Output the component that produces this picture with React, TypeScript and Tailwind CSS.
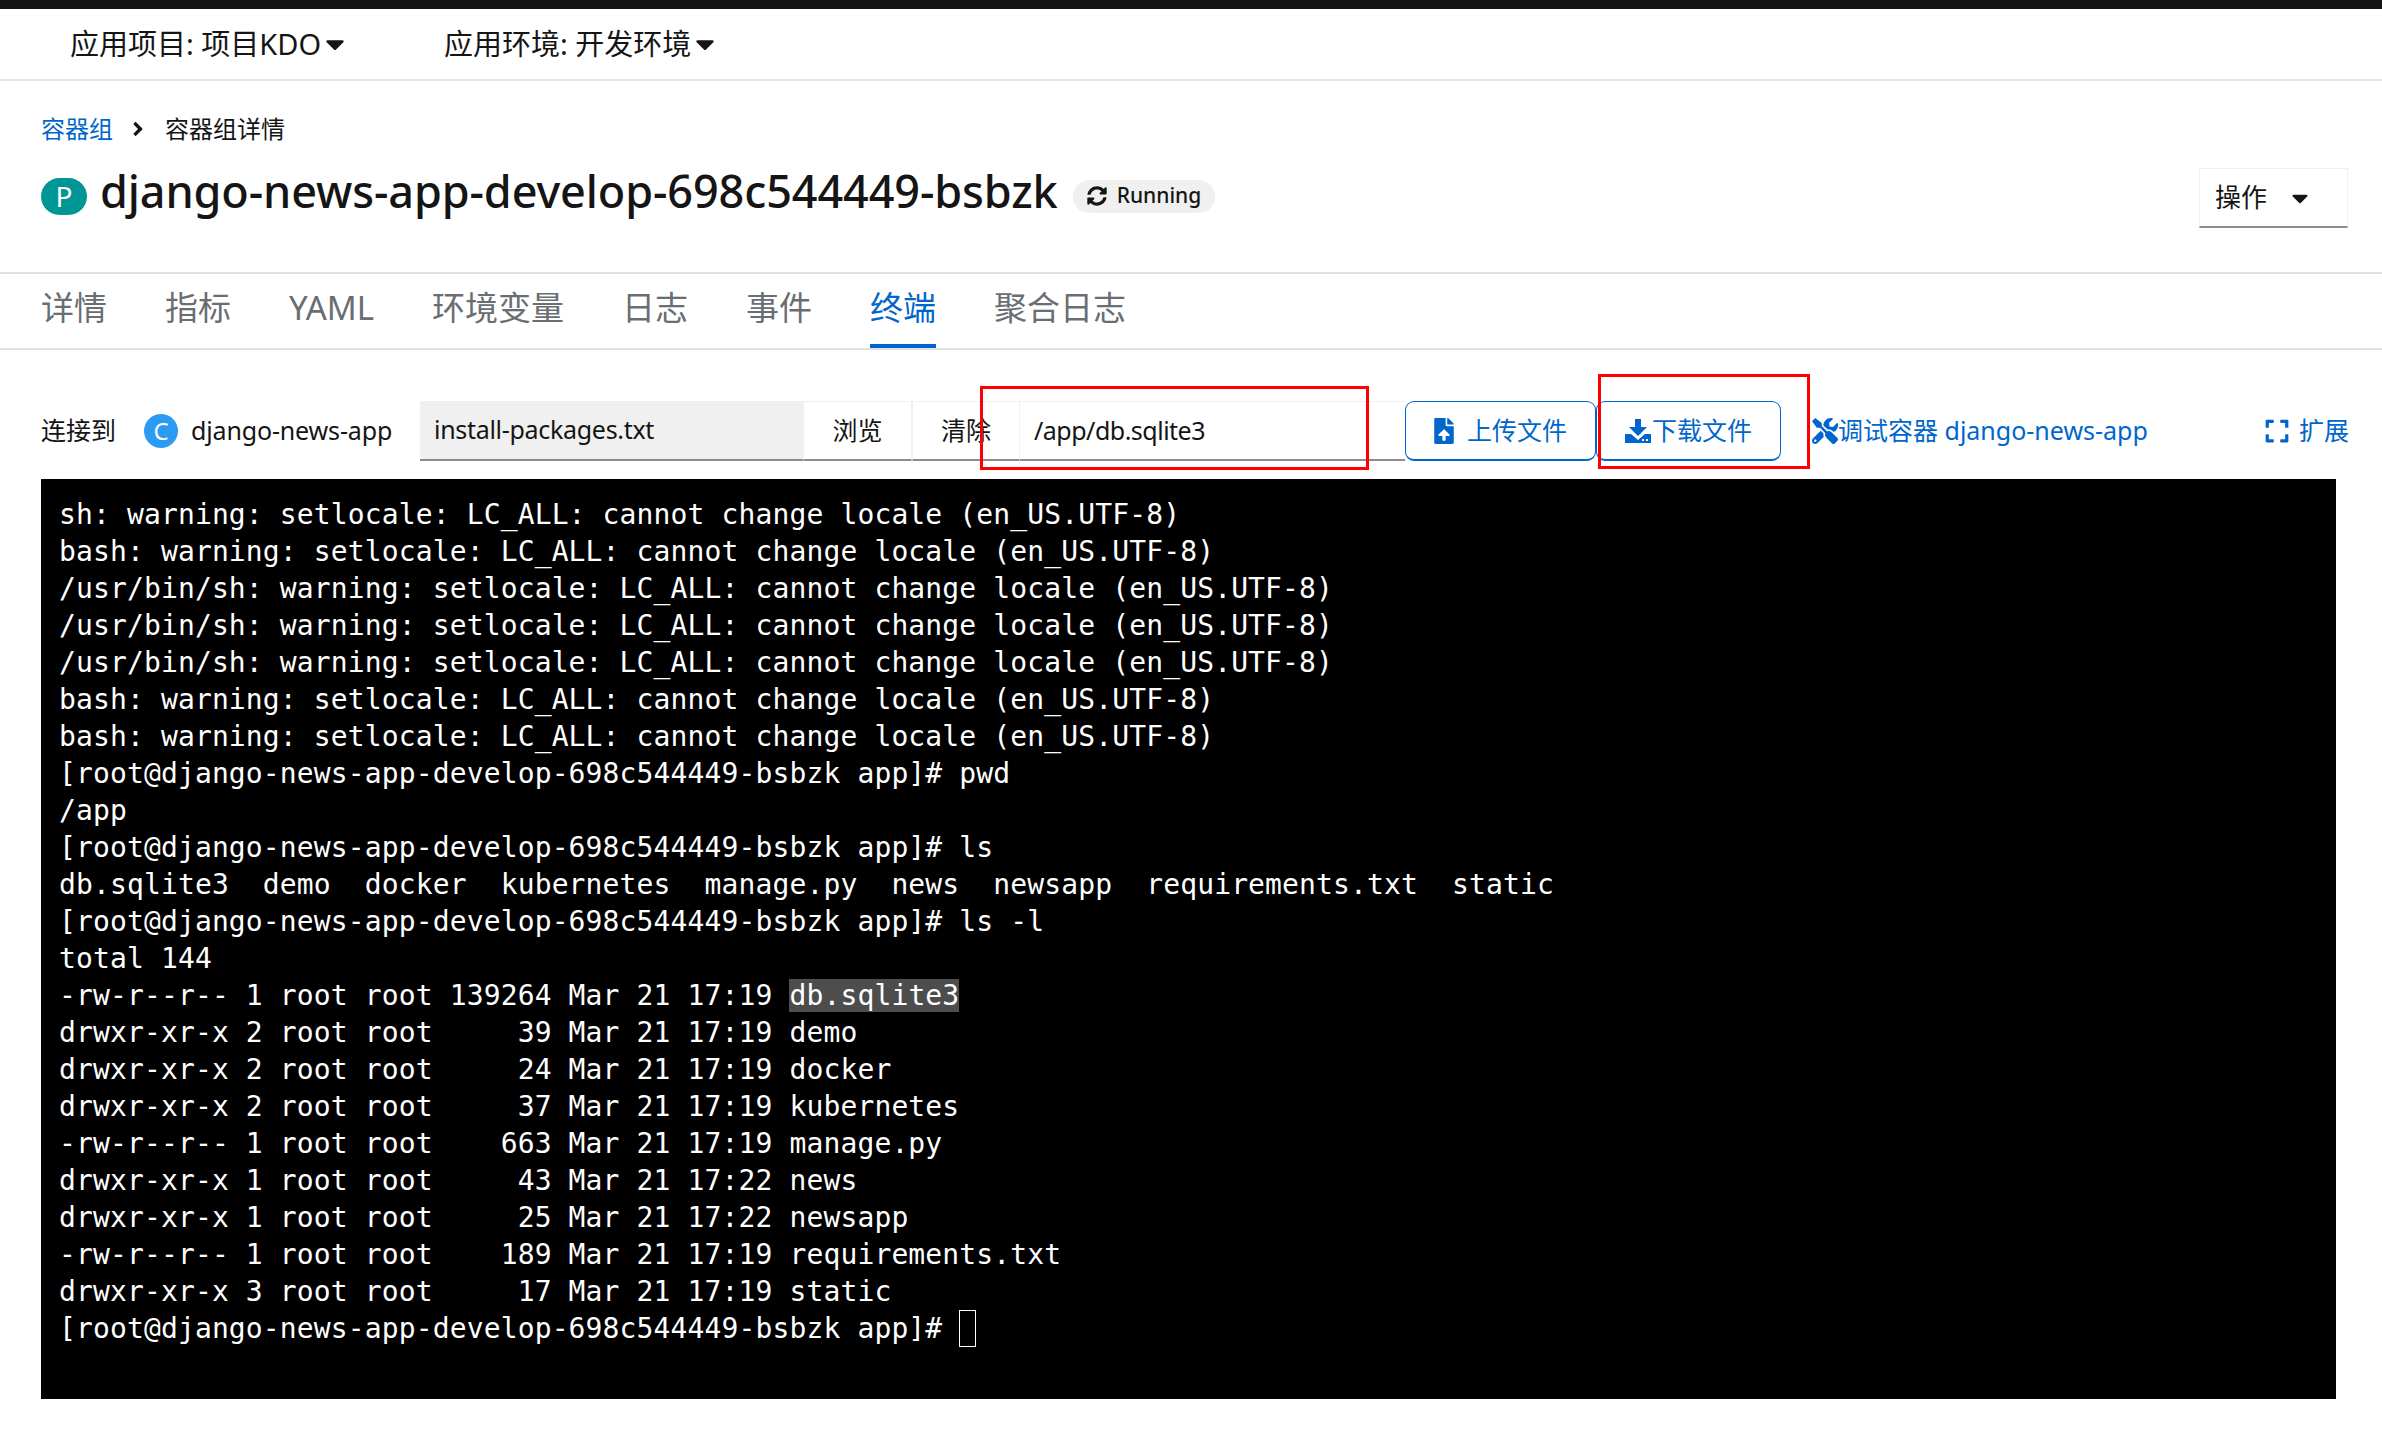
import React from 'react';
import { FaCaretDown, FaAngleRight, FaSyncAlt, FaFileUpload, FaTools, FaExpand } from 'react-icons/fa';

const TABS = ['详情', '指标', 'YAML', '环境变量', '日志', '事件', '终端', '聚合日志'];

const TERMINAL_LINES = [
  'sh: warning: setlocale: LC_ALL: cannot change locale (en_US.UTF-8)',
  'bash: warning: setlocale: LC_ALL: cannot change locale (en_US.UTF-8)',
  '/usr/bin/sh: warning: setlocale: LC_ALL: cannot change locale (en_US.UTF-8)',
  '/usr/bin/sh: warning: setlocale: LC_ALL: cannot change locale (en_US.UTF-8)',
  '/usr/bin/sh: warning: setlocale: LC_ALL: cannot change locale (en_US.UTF-8)',
  'bash: warning: setlocale: LC_ALL: cannot change locale (en_US.UTF-8)',
  'bash: warning: setlocale: LC_ALL: cannot change locale (en_US.UTF-8)',
  '[root@django-news-app-develop-698c544449-bsbzk app]# pwd',
  '/app',
  '[root@django-news-app-develop-698c544449-bsbzk app]# ls',
  'db.sqlite3  demo  docker  kubernetes  manage.py  news  newsapp  requirements.txt  static',
  '[root@django-news-app-develop-698c544449-bsbzk app]# ls -l',
  'total 144',
];

const LISTING = [
  'drwxr-xr-x 2 root root     39 Mar 21 17:19 demo',
  'drwxr-xr-x 2 root root     24 Mar 21 17:19 docker',
  'drwxr-xr-x 2 root root     37 Mar 21 17:19 kubernetes',
  '-rw-r--r-- 1 root root    663 Mar 21 17:19 manage.py',
  'drwxr-xr-x 1 root root     43 Mar 21 17:22 news',
  'drwxr-xr-x 1 root root     25 Mar 21 17:22 newsapp',
  '-rw-r--r-- 1 root root    189 Mar 21 17:19 requirements.txt',
  'drwxr-xr-x 3 root root     17 Mar 21 17:19 static',
];

const SANS = "font-['Noto_Sans','Noto_Sans_CJK_SC',sans-serif]";

// arrow dropping into a tray, with the two small drive lights
function DownloadIcon() {
  return (
    <svg width="26" height="24" viewBox="0 0 26 24" fill="currentColor">
      <path d="M10 0h6v8h6l-9 9-9-9h6z" />
      <path fillRule="evenodd" d="M0 15h6l7 6 7-6h6v9H0zM17 20v2h2v-2zM21 20v2h2v-2z" />
    </svg>
  );
}

export default function App() {
  return (
    <div className={`${SANS} w-[2382px] h-[1454px] bg-white text-[#151515] overflow-hidden`}>
      <div className="h-[9px] bg-[#151515]" />

      {/* project / env selectors */}
      <div className="h-[72px] border-b-2 border-[#e4e4e4] flex items-center pl-[70px] text-[29px]">
        <span className="flex items-center w-[374px]">
          应用项目: 项目KDO
          <FaCaretDown className="text-[30px] -ml-[1px]" />
        </span>
        <span className="flex items-center">
          应用环境: 开发环境
          <FaCaretDown className="text-[30px] -ml-[1px]" />
        </span>
      </div>

      {/* breadcrumb */}
      <div className="flex items-center pl-[41px] mt-[30px] h-[36px] text-[24px]">
        <span className="text-[#06c]">容器组</span>
        <FaAngleRight className="text-[22px] ml-[14px] mr-[16px]" />
        <span>容器组详情</span>
      </div>

      {/* title */}
      <div className="relative flex items-center pl-[41px] mt-[12px] h-[68px]">
        <span className="mt-[6px] w-[46px] h-[37px] rounded-full bg-[#009596] text-white text-[28px] flex items-center justify-center">
          P
        </span>
        <h1 className="ml-[13px] mb-[5px] w-[958px] text-[45px] font-medium tracking-[-0.11px] leading-none whitespace-nowrap">
          django-news-app-develop-698c544449-bsbzk
        </h1>
        <span className="mt-[6px] ml-[15px] h-[33px] w-[142px] rounded-full bg-[#f0f0f0] flex items-center justify-center gap-[10px] text-[21px] font-medium">
          <FaSyncAlt className="text-[20px]" />
          Running
        </span>
        <div className="absolute right-[34px] top-[9px] w-[149px] h-[60px] border border-[#f0f0f0] border-b-2 border-b-[#8a8d90] flex items-center pl-[15px] text-[26px]">
          操作
          <FaCaretDown className="text-[26px] ml-[20px]" />
        </div>
      </div>

      {/* tabs */}
      <div className="mt-[45px] h-[78px] border-y-2 border-[#e0e0e0] flex pl-[41px] gap-[58px] text-[33px] text-[#6a6e73]">
        {TABS.map((tab) => (
          <span
            key={tab}
            className={
              tab === '终端'
                ? 'h-[74px] pb-[3px] flex items-center text-[#06c] border-b-4 border-[#06c]'
                : 'h-[74px] pb-[7px] flex items-center'
            }
          >
            {tab}
          </span>
        ))}
      </div>

      {/* toolbar */}
      <div className="relative flex items-center pl-[41px] mt-[51px] h-[60px] text-[25px]">
        <span className="w-[103px]">连接到</span>
        <span className="w-[34px] h-[34px] rounded-full bg-[#2b9af3] text-white text-[24px] flex items-center justify-center">
          C
        </span>
        <span className="ml-[13px] w-[229px] tracking-[-0.15px]">django-news-app</span>
        <div className="w-[383px] h-full bg-[#f0f0f0] border-b-2 border-[#8a8d90] flex items-center pl-[14px] tracking-[-0.3px]">
          install-packages.txt
        </div>
        <div className="w-[109px] h-full border border-[#f0f0f0] border-b-2 border-b-[#8a8d90] flex items-center justify-center">
          浏览
        </div>
        <div className="w-[108px] h-full border border-[#f0f0f0] border-b-2 border-b-[#8a8d90] flex items-center justify-center">
          清除
        </div>
        <div className="w-[385px] h-full border-t border-[#f0f0f0] border-b-2 border-b-[#8a8d90] flex items-center pl-[14px] tracking-[-0.5px]">
          /app/db.sqlite3
        </div>
        <button className="w-[191px] h-full rounded-[9px] border border-b-2 border-[#06c] text-[#06c] flex items-center justify-center gap-[10px] pr-[3px]">
          <FaFileUpload className="text-[26px]" />
          上传文件
        </button>
        <button className="w-[185px] h-full rounded-[9px] border border-b-2 border-[#06c] text-[#06c] flex items-center justify-center gap-[1px]">
          <DownloadIcon />
          下载文件
        </button>
        <span className="ml-[31px] text-[#06c] flex items-center whitespace-nowrap">
          <FaTools className="text-[26px]" />
          调试容器 django-news-app
        </span>
        <span className="ml-auto mr-[33px] text-[#06c] flex items-center gap-[9px]">
          <FaExpand className="text-[26px]" />
          扩展
        </span>
        <div className="absolute left-[980px] top-[-15px] w-[389px] h-[84px] border-[3px] border-[#f00]" />
        <div className="absolute left-[1598px] top-[-27px] w-[212px] h-[95px] border-[3px] border-[#f00]" />
      </div>

      {/* terminal */}
      <div className="ml-[41px] mt-[18px] w-[2295px] h-[920px] bg-black text-white font-['DejaVu_Sans_Mono',monospace] text-[28px] tracking-[0.13px] leading-[37px] pl-[18px] pt-[17px] whitespace-pre">
        {TERMINAL_LINES.map((line, i) => (
          <div key={i}>{line}</div>
        ))}
        <div>
          -rw-r--r-- 1 root root 139264 Mar 21 17:19 <span className="bg-[#4d4d4d]">db.sqlite3</span>
        </div>
        {LISTING.map((line, i) => (
          <div key={i}>{line}</div>
        ))}
        <div className="flex items-center">
          [root@django-news-app-develop-698c544449-bsbzk app]#{' '}
          <span className="inline-block w-[17px] h-[37px] border border-white" />
        </div>
      </div>
    </div>
  );
}
